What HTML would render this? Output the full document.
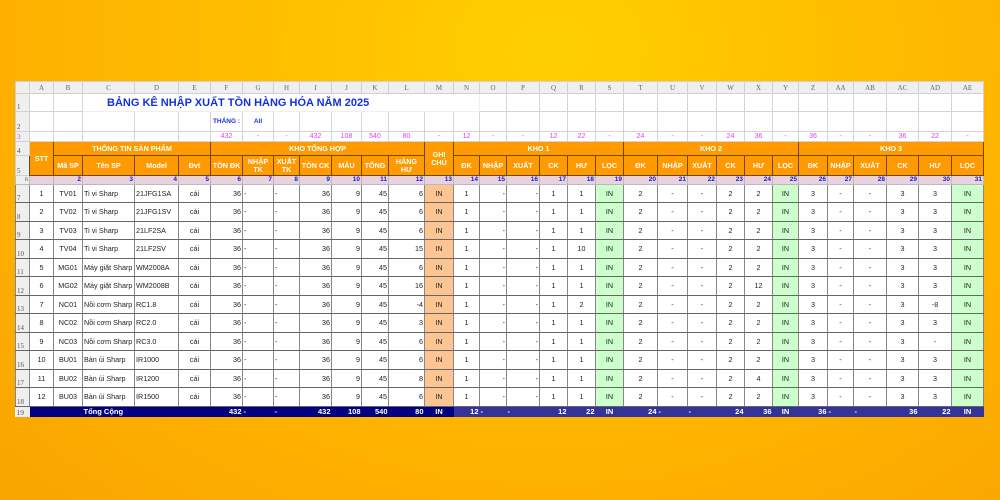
<!DOCTYPE html>
<html><head><meta charset="utf-8">
<style>
html,body{margin:0;padding:0;width:1000px;height:500px;overflow:hidden}
body{background:radial-gradient(ellipse at 55% 10%,#ffcf00 0%,#ffbd00 40%,#fdae00 75%,#f9a400 100%);position:relative;font-family:"Liberation Sans",sans-serif}
#sh{position:absolute;left:15px;top:81px;width:968px;background:#fff}
table{border-collapse:collapse;table-layout:fixed;width:968px}
td{border:1px solid #d4d4d4;font-size:7.2px;padding:0 1px;overflow:hidden;white-space:nowrap;text-align:center;color:#222;line-height:8px}
tr.ch td{background:#efefef;color:#666;font-family:"Liberation Serif",serif;font-size:7px;height:11px;border-color:#d0d0d0}
td.rh{background:#efefef;color:#555;font-family:"Liberation Serif",serif;font-size:7px;text-align:left;vertical-align:bottom;border-color:#d0d0d0}
td.h{background:#ff9a00;color:#fff;font-weight:bold;border:1px solid #6a4a10}
tr.n td{background:#e8d2df;color:#1a1ad0;font-weight:bold;text-align:right;font-size:6.5px;border-color:#bbb}
tr.p td{color:#e83cf0;font-size:7px}
tr.d td{border:1px solid #666;border-left-color:#888;border-right-color:#888}
tr.d td.g{background:#fcc592}
tr.d td.l{background:#ccffcc}
.r{text-align:right}.lf{text-align:left}
tr.t td{background:#000080;color:#fff;font-weight:bold;border:none;font-size:7.5px}
tr.t td.b{background:#333399}
</style></head><body>
<div id="sh"><table>
<colgroup><col style="width:14px"><col style="width:24px"><col style="width:29px"><col style="width:52px"><col style="width:44px"><col style="width:32px"><col style="width:32px"><col style="width:31px"><col style="width:26px"><col style="width:32px"><col style="width:30px"><col style="width:27px"><col style="width:36px"><col style="width:29px"><col style="width:26px"><col style="width:27px"><col style="width:33px"><col style="width:28px"><col style="width:28px"><col style="width:28px"><col style="width:34px"><col style="width:30px"><col style="width:29px"><col style="width:28px"><col style="width:28px"><col style="width:26px"><col style="width:29px"><col style="width:26px"><col style="width:33px"><col style="width:32px"><col style="width:33px"><col style="width:32px"></colgroup>
<tr class="ch"><td></td><td>A</td><td>B</td><td>C</td><td>D</td><td>E</td><td>F</td><td>G</td><td>H</td><td>I</td><td>J</td><td>K</td><td>L</td><td>M</td><td>N</td><td>O</td><td>P</td><td>Q</td><td>R</td><td>S</td><td>T</td><td>U</td><td>V</td><td>W</td><td>X</td><td>Y</td><td>Z</td><td>AA</td><td>AB</td><td>AC</td><td>AD</td><td>AE</td></tr>
<tr style="height:18px"><td class="rh">1</td><td></td><td></td><td colspan="12" style="text-align:left;padding-left:24px;color:#1530e0;font-weight:bold;font-size:11px;border-color:#eee">BẢNG KÊ NHẬP XUẤT TỒN HÀNG HÓA NĂM 2025</td><td></td><td></td><td></td><td></td><td></td><td></td><td></td><td></td><td></td><td></td><td></td><td></td><td></td><td></td><td></td><td></td><td></td></tr>
<tr style="height:20px"><td class="rh">2</td><td></td><td></td><td></td><td></td><td></td><td style="color:#1530e0;font-weight:bold;font-size:6.5px">THÁNG :</td><td style="color:#1530e0;font-weight:bold;font-size:6.5px">All</td><td></td><td></td><td></td><td></td><td></td><td></td><td></td><td></td><td></td><td></td><td></td><td></td><td></td><td></td><td></td><td></td><td></td><td></td><td></td><td></td><td></td><td></td><td></td><td></td></tr>
<tr class="p" style="height:10px"><td class="rh">3</td><td></td><td></td><td></td><td></td><td></td><td>432</td><td>-</td><td>-</td><td>432</td><td>108</td><td>540</td><td>80</td><td>-</td><td>12</td><td>-</td><td>-</td><td>12</td><td>22</td><td>-</td><td>24</td><td>-</td><td>-</td><td>24</td><td>36</td><td>-</td><td>36</td><td>-</td><td>-</td><td>36</td><td>22</td><td>-</td></tr>
<tr style="height:14px"><td class="rh">4</td><td class="h" rowspan="2">STT</td><td class="h" colspan="4">THÔNG TIN SẢN PHẨM</td><td class="h" colspan="7">KHO TỔNG HỢP</td><td class="h" rowspan="2">GHI<br>CHÚ</td><td class="h" colspan="6">KHO 1</td><td class="h" colspan="6">KHO 2</td><td class="h" colspan="6">KHO 3</td></tr>
<tr style="height:20px"><td class="rh">5</td><td class="h">Mã SP</td><td class="h">Tên SP</td><td class="h">Model</td><td class="h">Đvt</td><td class="h">TỒN ĐK</td><td class="h">NHẬP<br>TK</td><td class="h">XUẤT<br>TK</td><td class="h">TỒN CK</td><td class="h">MẪU</td><td class="h">TỔNG</td><td class="h">HÀNG<br>HƯ</td><td class="h">ĐK</td><td class="h">NHẬP</td><td class="h">XUẤT</td><td class="h">CK</td><td class="h">HƯ</td><td class="h">LỌC</td><td class="h">ĐK</td><td class="h">NHẬP</td><td class="h">XUẤT</td><td class="h">CK</td><td class="h">HƯ</td><td class="h">LỌC</td><td class="h">ĐK</td><td class="h">NHẬP</td><td class="h">XUẤT</td><td class="h">CK</td><td class="h">HƯ</td><td class="h">LỌC</td></tr>
<tr class="n" style="height:9px"><td class="rh" style="color:#555;font-weight:normal;background:#efefef">6</td><td></td><td>2</td><td>3</td><td>4</td><td>5</td><td>6</td><td>7</td><td>8</td><td>9</td><td>10</td><td>11</td><td>12</td><td>13</td><td>14</td><td>15</td><td>16</td><td>17</td><td>18</td><td>19</td><td>20</td><td>21</td><td>22</td><td>23</td><td>24</td><td>25</td><td>26</td><td>27</td><td>28</td><td>29</td><td>30</td><td>31</td></tr>
<tr class="d" style="height:18px"><td class="rh">7</td><td>1</td><td>TV01</td><td class="lf">Ti vi Sharp</td><td class="lf">21JFG1SA</td><td>cái</td><td class="r">36</td><td class="lf">-</td><td class="lf">-</td><td class="r">36</td><td class="r">9</td><td class="r">45</td><td class="r">6</td><td class="g">IN</td><td>1</td><td class="r">-</td><td class="r">-</td><td>1</td><td>1</td><td class="l">IN</td><td>2</td><td>-</td><td>-</td><td>2</td><td>2</td><td class="l">IN</td><td>3</td><td>-</td><td>-</td><td>3</td><td>3</td><td class="l">IN</td></tr>
<tr class="d" style="height:19px"><td class="rh">8</td><td>2</td><td>TV02</td><td class="lf">Ti vi Sharp</td><td class="lf">21JFG1SV</td><td>cái</td><td class="r">36</td><td class="lf">-</td><td class="lf">-</td><td class="r">36</td><td class="r">9</td><td class="r">45</td><td class="r">6</td><td class="g">IN</td><td>1</td><td class="r">-</td><td class="r">-</td><td>1</td><td>1</td><td class="l">IN</td><td>2</td><td>-</td><td>-</td><td>2</td><td>2</td><td class="l">IN</td><td>3</td><td>-</td><td>-</td><td>3</td><td>3</td><td class="l">IN</td></tr>
<tr class="d" style="height:18px"><td class="rh">9</td><td>3</td><td>TV03</td><td class="lf">Ti vi Sharp</td><td class="lf">21LF2SA</td><td>cái</td><td class="r">36</td><td class="lf">-</td><td class="lf">-</td><td class="r">36</td><td class="r">9</td><td class="r">45</td><td class="r">6</td><td class="g">IN</td><td>1</td><td class="r">-</td><td class="r">-</td><td>1</td><td>1</td><td class="l">IN</td><td>2</td><td>-</td><td>-</td><td>2</td><td>2</td><td class="l">IN</td><td>3</td><td>-</td><td>-</td><td>3</td><td>3</td><td class="l">IN</td></tr>
<tr class="d" style="height:19px"><td class="rh">10</td><td>4</td><td>TV04</td><td class="lf">Ti vi Sharp</td><td class="lf">21LF2SV</td><td>cái</td><td class="r">36</td><td class="lf">-</td><td class="lf">-</td><td class="r">36</td><td class="r">9</td><td class="r">45</td><td class="r">15</td><td class="g">IN</td><td>1</td><td class="r">-</td><td class="r">-</td><td>1</td><td>10</td><td class="l">IN</td><td>2</td><td>-</td><td>-</td><td>2</td><td>2</td><td class="l">IN</td><td>3</td><td>-</td><td>-</td><td>3</td><td>3</td><td class="l">IN</td></tr>
<tr class="d" style="height:18px"><td class="rh">11</td><td>5</td><td>MG01</td><td class="lf">Máy giặt Sharp</td><td class="lf">WM2008A</td><td>cái</td><td class="r">36</td><td class="lf">-</td><td class="lf">-</td><td class="r">36</td><td class="r">9</td><td class="r">45</td><td class="r">6</td><td class="g">IN</td><td>1</td><td class="r">-</td><td class="r">-</td><td>1</td><td>1</td><td class="l">IN</td><td>2</td><td>-</td><td>-</td><td>2</td><td>2</td><td class="l">IN</td><td>3</td><td>-</td><td>-</td><td>3</td><td>3</td><td class="l">IN</td></tr>
<tr class="d" style="height:19px"><td class="rh">12</td><td>6</td><td>MG02</td><td class="lf">Máy giặt Sharp</td><td class="lf">WM2008B</td><td>cái</td><td class="r">36</td><td class="lf">-</td><td class="lf">-</td><td class="r">36</td><td class="r">9</td><td class="r">45</td><td class="r">16</td><td class="g">IN</td><td>1</td><td class="r">-</td><td class="r">-</td><td>1</td><td>1</td><td class="l">IN</td><td>2</td><td>-</td><td>-</td><td>2</td><td>12</td><td class="l">IN</td><td>3</td><td>-</td><td>-</td><td>3</td><td>3</td><td class="l">IN</td></tr>
<tr class="d" style="height:18px"><td class="rh">13</td><td>7</td><td>NC01</td><td class="lf">Nồi cơm Sharp</td><td class="lf">RC1.8</td><td>cái</td><td class="r">36</td><td class="lf">-</td><td class="lf">-</td><td class="r">36</td><td class="r">9</td><td class="r">45</td><td class="r">-4</td><td class="g">IN</td><td>1</td><td class="r">-</td><td class="r">-</td><td>1</td><td>2</td><td class="l">IN</td><td>2</td><td>-</td><td>-</td><td>2</td><td>2</td><td class="l">IN</td><td>3</td><td>-</td><td>-</td><td>3</td><td>-8</td><td class="l">IN</td></tr>
<tr class="d" style="height:19px"><td class="rh">14</td><td>8</td><td>NC02</td><td class="lf">Nồi cơm Sharp</td><td class="lf">RC2.0</td><td>cái</td><td class="r">36</td><td class="lf">-</td><td class="lf">-</td><td class="r">36</td><td class="r">9</td><td class="r">45</td><td class="r">3</td><td class="g">IN</td><td>1</td><td class="r">-</td><td class="r">-</td><td>1</td><td>1</td><td class="l">IN</td><td>2</td><td>-</td><td>-</td><td>2</td><td>2</td><td class="l">IN</td><td>3</td><td>-</td><td>-</td><td>3</td><td>3</td><td class="l">IN</td></tr>
<tr class="d" style="height:18px"><td class="rh">15</td><td>9</td><td>NC03</td><td class="lf">Nồi cơm Sharp</td><td class="lf">RC3.0</td><td>cái</td><td class="r">36</td><td class="lf">-</td><td class="lf">-</td><td class="r">36</td><td class="r">9</td><td class="r">45</td><td class="r">6</td><td class="g">IN</td><td>1</td><td class="r">-</td><td class="r">-</td><td>1</td><td>1</td><td class="l">IN</td><td>2</td><td>-</td><td>-</td><td>2</td><td>2</td><td class="l">IN</td><td>3</td><td>-</td><td>-</td><td>3</td><td>-</td><td class="l">IN</td></tr>
<tr class="d" style="height:19px"><td class="rh">16</td><td>10</td><td>BU01</td><td class="lf">Bàn ủi Sharp</td><td class="lf">IR1000</td><td>cái</td><td class="r">36</td><td class="lf">-</td><td class="lf">-</td><td class="r">36</td><td class="r">9</td><td class="r">45</td><td class="r">6</td><td class="g">IN</td><td>1</td><td class="r">-</td><td class="r">-</td><td>1</td><td>1</td><td class="l">IN</td><td>2</td><td>-</td><td>-</td><td>2</td><td>2</td><td class="l">IN</td><td>3</td><td>-</td><td>-</td><td>3</td><td>3</td><td class="l">IN</td></tr>
<tr class="d" style="height:18px"><td class="rh">17</td><td>11</td><td>BU02</td><td class="lf">Bàn ủi Sharp</td><td class="lf">IR1200</td><td>cái</td><td class="r">36</td><td class="lf">-</td><td class="lf">-</td><td class="r">36</td><td class="r">9</td><td class="r">45</td><td class="r">8</td><td class="g">IN</td><td>1</td><td class="r">-</td><td class="r">-</td><td>1</td><td>1</td><td class="l">IN</td><td>2</td><td>-</td><td>-</td><td>2</td><td>4</td><td class="l">IN</td><td>3</td><td>-</td><td>-</td><td>3</td><td>3</td><td class="l">IN</td></tr>
<tr class="d" style="height:19px"><td class="rh">18</td><td>12</td><td>BU03</td><td class="lf">Bàn ủi Sharp</td><td class="lf">IR1500</td><td>cái</td><td class="r">36</td><td class="lf">-</td><td class="lf">-</td><td class="r">36</td><td class="r">9</td><td class="r">45</td><td class="r">6</td><td class="g">IN</td><td>1</td><td class="r">-</td><td class="r">-</td><td>1</td><td>1</td><td class="l">IN</td><td>2</td><td>-</td><td>-</td><td>2</td><td>2</td><td class="l">IN</td><td>3</td><td>-</td><td>-</td><td>3</td><td>3</td><td class="l">IN</td></tr>
<tr class="t" style="height:10px"><td class="rh" style="background:#efefef;color:#555;font-weight:normal">19</td><td></td><td></td><td class="lf">Tổng Cộng</td><td></td><td></td><td class="r">432</td><td class="lf">-</td><td class="lf">-</td><td class="r">432</td><td class="r">108</td><td class="r">540</td><td class="r">80</td><td>IN</td><td class="b r">12</td><td class="b lf">-</td><td class="b lf">-</td><td class="b r">12</td><td class="b r">22</td><td class="b">IN</td><td class="b r">24</td><td class="b lf">-</td><td class="b lf">-</td><td class="b r">24</td><td class="b r">36</td><td class="b">IN</td><td class="b r">36</td><td class="b lf">-</td><td class="b lf">-</td><td class="b r">36</td><td class="b r">22</td><td class="b">IN</td></tr>
</table></div>
</body></html>
